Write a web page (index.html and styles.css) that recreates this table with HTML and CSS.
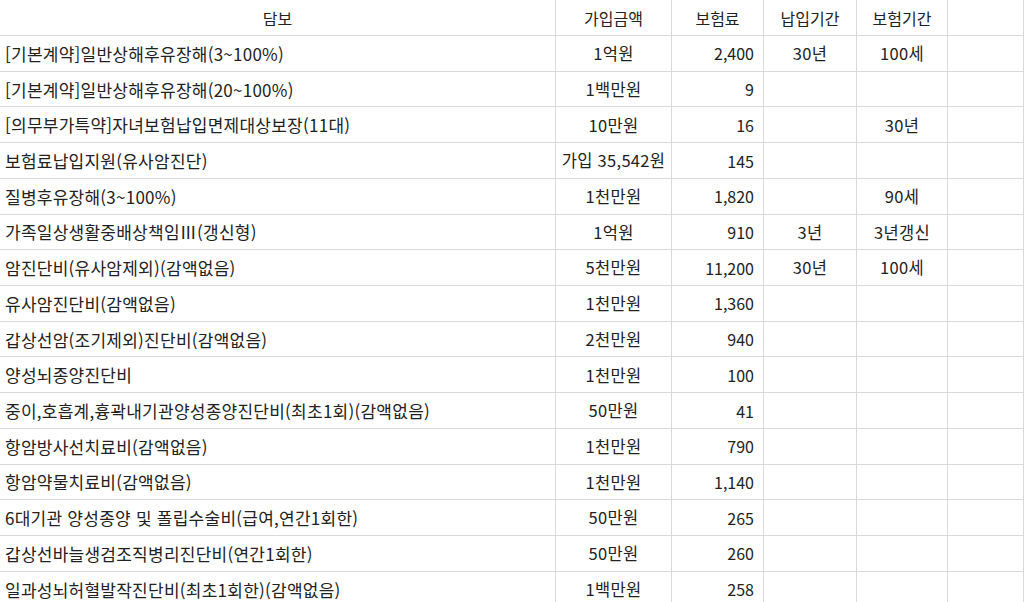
FILE: index.html
```html
<!DOCTYPE html>
<html lang="ko">
<head>
<meta charset="utf-8">
<title>담보 목록</title>
<link rel="stylesheet" href="styles.css">
</head>
<body>
<div class="sheet">
  <div class="cell head">담보</div><div class="cell head">가입금액</div><div class="cell head">보험료</div><div class="cell head">납입기간</div><div class="cell head">보험기간</div><div class="cell head"></div>

  <div class="cell name">[기본계약]일반상해후유장해(3~100%)</div><div class="cell mid">1억원</div><div class="cell num">2,400</div><div class="cell mid">30년</div><div class="cell mid">100세</div><div class="cell"></div>
  <div class="cell name">[기본계약]일반상해후유장해(20~100%)</div><div class="cell mid">1백만원</div><div class="cell num">9</div><div class="cell mid"></div><div class="cell mid"></div><div class="cell"></div>
  <div class="cell name">[의무부가특약]자녀보험납입면제대상보장(11대)</div><div class="cell mid">10만원</div><div class="cell num">16</div><div class="cell mid"></div><div class="cell mid">30년</div><div class="cell"></div>
  <div class="cell name">보험료납입지원(유사암진단)</div><div class="cell mid">가입 35,542원</div><div class="cell num">145</div><div class="cell mid"></div><div class="cell mid"></div><div class="cell"></div>
  <div class="cell name">질병후유장해(3~100%)</div><div class="cell mid">1천만원</div><div class="cell num">1,820</div><div class="cell mid"></div><div class="cell mid">90세</div><div class="cell"></div>
  <div class="cell name">가족일상생활중배상책임Ⅲ(갱신형)</div><div class="cell mid">1억원</div><div class="cell num">910</div><div class="cell mid">3년</div><div class="cell mid">3년갱신</div><div class="cell"></div>
  <div class="cell name">암진단비(유사암제외)(감액없음)</div><div class="cell mid">5천만원</div><div class="cell num">11,200</div><div class="cell mid">30년</div><div class="cell mid">100세</div><div class="cell"></div>
  <div class="cell name">유사암진단비(감액없음)</div><div class="cell mid">1천만원</div><div class="cell num">1,360</div><div class="cell mid"></div><div class="cell mid"></div><div class="cell"></div>
  <div class="cell name">갑상선암(조기제외)진단비(감액없음)</div><div class="cell mid">2천만원</div><div class="cell num">940</div><div class="cell mid"></div><div class="cell mid"></div><div class="cell"></div>
  <div class="cell name">양성뇌종양진단비</div><div class="cell mid">1천만원</div><div class="cell num">100</div><div class="cell mid"></div><div class="cell mid"></div><div class="cell"></div>
  <div class="cell name">중이,호흡계,흉곽내기관양성종양진단비(최초1회)(감액없음)</div><div class="cell mid">50만원</div><div class="cell num">41</div><div class="cell mid"></div><div class="cell mid"></div><div class="cell"></div>
  <div class="cell name">항암방사선치료비(감액없음)</div><div class="cell mid">1천만원</div><div class="cell num">790</div><div class="cell mid"></div><div class="cell mid"></div><div class="cell"></div>
  <div class="cell name">항암약물치료비(감액없음)</div><div class="cell mid">1천만원</div><div class="cell num">1,140</div><div class="cell mid"></div><div class="cell mid"></div><div class="cell"></div>
  <div class="cell name">6대기관 양성종양 및 폴립수술비(급여,연간1회한)</div><div class="cell mid">50만원</div><div class="cell num">265</div><div class="cell mid"></div><div class="cell mid"></div><div class="cell"></div>
  <div class="cell name">갑상선바늘생검조직병리진단비(연간1회한)</div><div class="cell mid">50만원</div><div class="cell num">260</div><div class="cell mid"></div><div class="cell mid"></div><div class="cell"></div>
  <div class="cell name">일과성뇌허혈발작진단비(최초1회한)(감액없음)</div><div class="cell mid">1백만원</div><div class="cell num">258</div><div class="cell mid"></div><div class="cell mid"></div><div class="cell"></div>
</div>
</body>
</html>
```

FILE: styles.css
```css
html, body {
  margin: 0;
  padding: 0;
  background: #ffffff;
  overflow: hidden;
}

body {
  font-family: "Noto Sans CJK KR", "Noto Sans", sans-serif;
  font-size: 16px;
  color: #222222;
}

.sheet {
  display: grid;
  grid-template-columns: 556px 116px 92px 93px 91px 76px;
  grid-template-rows: 36px;
  grid-auto-rows: 35.73px;
  border-top: 1px solid #e2e2e2;
  margin-top: -1px;
}

.cell {
  box-sizing: border-box;
  border-right: 1px solid #d9d9d9;
  border-bottom: 1px solid #d9d9d9;
  display: flex;
  align-items: center;
  white-space: nowrap;
  overflow: hidden;
  line-height: 1;
}

.head {
  justify-content: center;
}

.name {
  justify-content: flex-start;
  padding-left: 5px;
  font-size: 17px;
  letter-spacing: 0.25px;
}

.mid {
  justify-content: center;
  font-size: 16.5px;
  letter-spacing: 0.3px;
}

.num {
  justify-content: flex-end;
  padding-right: 9px;
}
```
